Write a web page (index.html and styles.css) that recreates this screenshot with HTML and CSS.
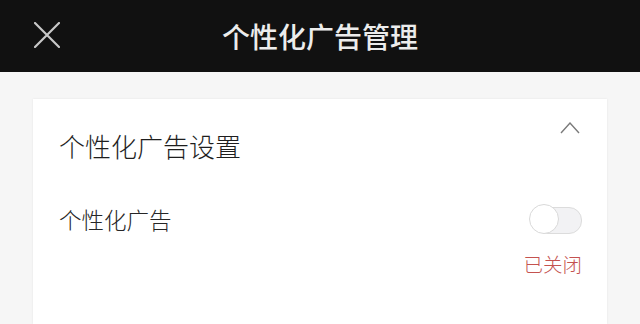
FILE: index.html
```html
<!DOCTYPE html>
<html lang="zh-CN">
<head>
<meta charset="utf-8">
<title>个性化广告管理</title>
<link rel="stylesheet" href="styles.css">
</head>
<body>
<header class="topbar">
  <div class="topbar-left">
    <svg class="close-icon" width="26" height="26" viewBox="0 0 26 26" aria-hidden="true">
      <path d="M1 1 L25 25 M25 1 L1 25" stroke="#c8c8c8" stroke-width="2.2" stroke-linecap="round" fill="none"/>
    </svg>
  </div>
  <h1 class="topbar-title">个性化广告管理</h1>
  <div class="topbar-right"></div>
</header>
<main class="content">
  <section class="card">
    <div class="card-head">
      <h2 class="card-title">个性化广告设置</h2>
      <svg class="chevron" width="20" height="12" viewBox="0 0 20 12" aria-hidden="true">
        <polyline points="1,11 10,1 19,11" stroke="#7a7a7a" stroke-width="1.4" fill="none"/>
      </svg>
    </div>
    <div class="setting-row">
      <span class="setting-label">个性化广告</span>
      <div class="switch">
        <span class="switch-track"></span>
        <span class="switch-knob"></span>
      </div>
    </div>
    <div class="setting-status">已关闭</div>
  </section>
</main>
</body>
</html>
```

FILE: styles.css
```css
html, body {
  margin: 0;
  padding: 0;
}
body {
  width: 640px;
  height: 324px;
  overflow: hidden;
  background: #f6f6f6;
  font-family: "Noto Sans CJK SC", "Noto Sans", sans-serif;
}
.topbar {
  height: 72px;
  background: #111111;
  display: grid;
  grid-template-columns: 1fr auto 1fr;
  align-items: center;
}
.topbar-left {
  padding-left: 34px;
  display: flex;
  align-items: center;
}
.close-icon {
  display: block;
  margin-top: -2px;
}
.topbar-title {
  margin: 0;
  font-size: 28px;
  line-height: 36px;
  font-weight: 500;
  color: #ececec;
  margin-top: -1px;
}
.content {
  padding: 27px 33px 0 33px;
}
.card {
  background: #ffffff;
  box-shadow: 0 0 2px rgba(0, 0, 0, 0.08);
  padding: 23px 25px 0 26px;
  height: 225px;
  box-sizing: border-box;
}
.card-head {
  display: flex;
  justify-content: space-between;
  align-items: flex-start;
}
.card-title {
  margin: 6px 0 0 0;
  font-size: 26px;
  line-height: 36px;
  font-weight: 300;
  color: #1e1e1e;
}
.chevron {
  display: block;
  margin-right: 2px;
}
.setting-row {
  margin-top: 39px;
  height: 32px;
  display: flex;
  justify-content: space-between;
  align-items: center;
}
.setting-label {
  font-size: 22.5px;
  line-height: 32px;
  font-weight: 300;
  color: #262626;
}
.switch {
  position: relative;
  width: 53px;
  height: 31px;
}
.switch-track {
  position: absolute;
  left: 5px;
  top: 3px;
  width: 46px;
  height: 25px;
  border-radius: 13px;
  background: #f2f2f4;
  border: 1px solid #dcdcdc;
}
.switch-knob {
  position: absolute;
  left: 0;
  top: 0;
  width: 28px;
  height: 28px;
  border-radius: 50%;
  background: #ffffff;
  border: 1.5px solid #d9d9d9;
}
.setting-status {
  margin-top: 17px;
  text-align: right;
  font-size: 19.5px;
  line-height: 24px;
  font-weight: 300;
  color: #c4524f;
}
```
